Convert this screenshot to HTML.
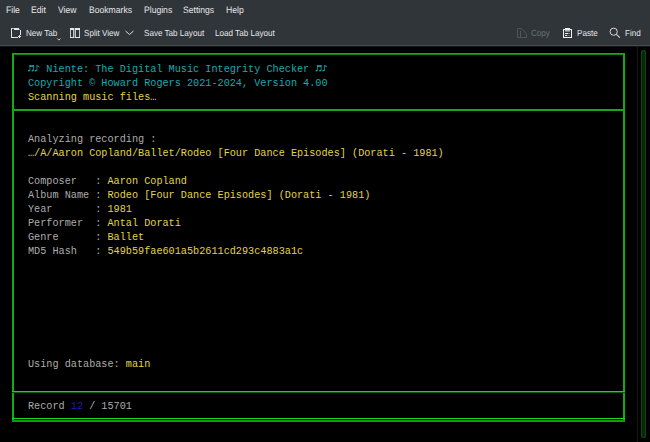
<!DOCTYPE html>
<html><head><meta charset="utf-8">
<style>
html,body{margin:0;padding:0;width:650px;height:442px;overflow:hidden;background:#000;}
#top{position:absolute;left:0;top:0;width:650px;height:45px;background:#30353a;}
#topline{position:absolute;left:0;top:45px;width:650px;height:1px;background:#464b50;}
#topline2{position:absolute;left:0;top:46px;width:650px;height:1px;background:#15171a;}
.m{position:absolute;font-family:"Liberation Sans",sans-serif;font-size:9.3px;color:#e6e7e8;line-height:10px;white-space:pre;transform:scaleX(0.925);transform-origin:0 0;text-rendering:geometricPrecision;}
.t{position:absolute;font-family:"Liberation Sans",sans-serif;font-size:8.8px;color:#e6e7e8;line-height:10px;white-space:pre;transform:scaleX(0.92);transform-origin:0 0;text-rendering:geometricPrecision;}
.dis{color:#6b7075;}
.ic{position:absolute;}
.term{position:absolute;font-family:"Liberation Mono",monospace;font-size:10.2px;line-height:14px;white-space:pre;color:#acacac;}
.cy{color:#18abb0;}
.ye{color:#e0d646;}
.bl{color:#1c1cbc;}
.g{position:absolute;background:#15aa15;}
</style></head><body>
<div id="top"></div>
<div id="topline"></div>
<div id="topline2"></div>

<div class="m" style="left:6px;top:5px;">File</div>
<div class="m" style="left:31px;top:5px;">Edit</div>
<div class="m" style="left:58px;top:5px;">View</div>
<div class="m" style="left:89px;top:5px;">Bookmarks</div>
<div class="m" style="left:144px;top:5px;">Plugins</div>
<div class="m" style="left:183px;top:5px;">Settings</div>
<div class="m" style="left:226px;top:5px;">Help</div>

<svg class="ic" style="left:0;top:0;" width="650" height="46" viewBox="0 0 650 46" shape-rendering="crispEdges">
  <!-- New Tab -->
  <g fill="#e2e3e4">
    <rect x="11" y="28" width="1" height="10"/>
    <rect x="11" y="37" width="7" height="1"/>
    <rect x="14" y="28" width="5" height="2"/>
    <rect x="12" y="28" width="2" height="1" fill="#bfc1c3"/>
    <rect x="19" y="29" width="1" height="1" fill="#9a9da0"/>
    <rect x="20" y="30" width="1" height="5"/>
    <rect x="18" y="36" width="3" height="1"/>
    <rect x="19" y="35" width="1" height="3"/>
  </g>
  <!-- Split view -->
  <g fill="#e6e7e8">
    <rect x="70" y="28" width="4" height="2"/>
    <rect x="75" y="28" width="5" height="2"/>
    <rect x="70" y="37" width="4" height="1"/>
    <rect x="75" y="37" width="5" height="1"/>
  </g>
  <g fill="#c4c5c6">
    <rect x="70" y="30" width="1" height="7"/>
    <rect x="73" y="30" width="1" height="7"/>
    <rect x="75" y="30" width="1" height="7"/>
    <rect x="79" y="30" width="1" height="7"/>
  </g>
  <rect x="74" y="28" width="1" height="10" fill="#75797d"/>
  <!-- Copy (disabled) -->
<!-- Paste -->
  <g fill="#eff0f1">
    <rect x="563" y="29" width="1" height="9"/>
    <rect x="571" y="29" width="1" height="9"/>
    <rect x="563" y="37" width="9" height="1"/>
    <rect x="563" y="29" width="9" height="1"/>
    <rect x="565" y="28" width="5" height="2"/>
    <rect x="565" y="30" width="5" height="1" fill="#b8babc"/>
    <rect x="565" y="33" width="3" height="1"/>
    <rect x="565" y="35" width="2" height="1"/>
  </g>
  <rect x="565" y="31" width="5" height="1" fill="#7d8185"/>
  <rect x="568" y="33" width="2" height="1" fill="#7d8185"/>
  <rect x="567" y="35" width="3" height="1" fill="#5d6165"/>
</svg>
<svg class="ic" style="left:0;top:0;" width="650" height="46" viewBox="0 0 650 46">
  <path d="M517.5 28.5 H521.2 L526.5 33.8 V37.5 H517.5 Z" stroke="#50555a" stroke-width="1" fill="none" stroke-linejoin="round"/>
  <path d="M520.5 30.5 V37" stroke="#50555a" stroke-width="1" fill="none"/>
  <circle cx="613.7" cy="31.7" r="3.6" fill="none" stroke="#d6d7d8" stroke-width="1"/>
  <path d="M616.4 34.4 L619.9 37.7" stroke="#d6d7d8" stroke-width="1.1"/>
  <path d="M57.3 38.5 L58.9 40.1 L60.5 38.5" fill="none" stroke="#eff0f1" stroke-width="0.8"/>
  <path d="M125.5 31 L129.5 34.5 L133.5 31" fill="none" stroke="#eff0f1" stroke-width="0.9"/>
</svg>
<div class="t" style="left:25.6px;top:28px;">New Tab</div>
<div class="t" style="left:84px;top:28px;">Split View</div>
<div class="t" style="left:144px;top:28px;">Save Tab Layout</div>
<div class="t" style="left:215px;top:28px;">Load Tab Layout</div>
<div class="t dis" style="left:531px;top:28px;">Copy</div>
<div class="t" style="left:577px;top:28px;">Paste</div>
<div class="t" style="left:625px;top:28px;">Find</div>

<!-- terminal -->
<div style="position:absolute;left:637px;top:47px;width:1px;height:395px;background:#161616;"></div>
<div style="position:absolute;left:641px;top:50px;width:5px;height:388px;border-radius:2.5px;background:#082808;box-shadow:inset 0 0 0 1px #104a10;"></div>

<div class="g" style="left:12px;top:53px;width:613px;height:1px;"></div>
<div class="g" style="left:12px;top:54px;width:613px;height:1px;background:#0f860f;"></div>
<div class="g" style="left:12px;top:53px;width:2px;height:368px;"></div>
<div class="g" style="left:623px;top:53px;width:2px;height:368px;"></div>
<div class="g" style="left:12px;top:109px;width:613px;height:2px;"></div>
<div class="g" style="left:12px;top:391px;width:613px;height:1px;background:#1ad41a;"></div>
<div class="g" style="left:12px;top:392px;width:613px;height:1px;background:#0b5a0b;"></div>
<div class="g" style="left:12px;top:418px;width:613px;height:1px;background:#1cdc1c;"></div>
<div class="g" style="left:12px;top:420px;width:613px;height:2px;background:#119c11;"></div>

<svg class="ic" style="left:0;top:0;" width="650" height="100" viewBox="0 0 650 100">
  <defs>
    <g id="nt" fill="#17a2a6">
      <ellipse cx="0.95" cy="5.6" rx="1.1" ry="0.8" transform="rotate(-20 0.95 5.6)"/>
      <ellipse cx="4.65" cy="5.6" rx="1.1" ry="0.8" transform="rotate(-20 4.65 5.6)"/>
      <rect x="1.6" y="0" width="0.75" height="5.6"/>
      <rect x="5.15" y="0" width="0.75" height="5.6"/>
      <rect x="1.6" y="0.2" width="4.3" height="1.7"/>
      <ellipse cx="7.85" cy="5.6" rx="1.1" ry="0.8" transform="rotate(-20 7.85 5.6)"/>
      <rect x="8.55" y="0" width="0.75" height="5.6"/>
      <path d="M9.3 0 Q10.6 0.7 11.6 2.1 L11.1 2.4 Q10.3 1.6 9.3 1.5 Z"/>
    </g>
  </defs>
  <use href="#nt" x="28" y="65"/>
  <use href="#nt" x="315.6" y="65"/>
</svg>
<div class="term" style="left:28px;top:63px;"><span class="cy">   Niente: The Digital Music Integrity Checker</span>
<span class="cy">Copyright © Howard Rogers 2021-2024, Version 4.00</span>
<span class="ye">Scanning music files…</span></div>

<div class="term" style="left:28px;top:133px;">Analyzing recording :
<span class="ye">…/A/Aaron Copland/Ballet/Rodeo [Four Dance Episodes] (Dorati - 1981)</span>

Composer   : <span class="ye">Aaron Copland</span>
Album Name : <span class="ye">Rodeo [Four Dance Episodes] (Dorati - 1981)</span>
Year       : <span class="ye">1981</span>
Performer  : <span class="ye">Antal Dorati</span>
Genre      : <span class="ye">Ballet</span>
MD5 Hash   : <span class="ye">549b59fae601a5b2611cd293c4883a1c</span></div>

<div class="term" style="left:28px;top:358px;">Using database: <span class="ye">main</span></div>
<div class="term" style="left:28px;top:400px;">Record <span class="bl">12</span> / 15701</div>
</body></html>
